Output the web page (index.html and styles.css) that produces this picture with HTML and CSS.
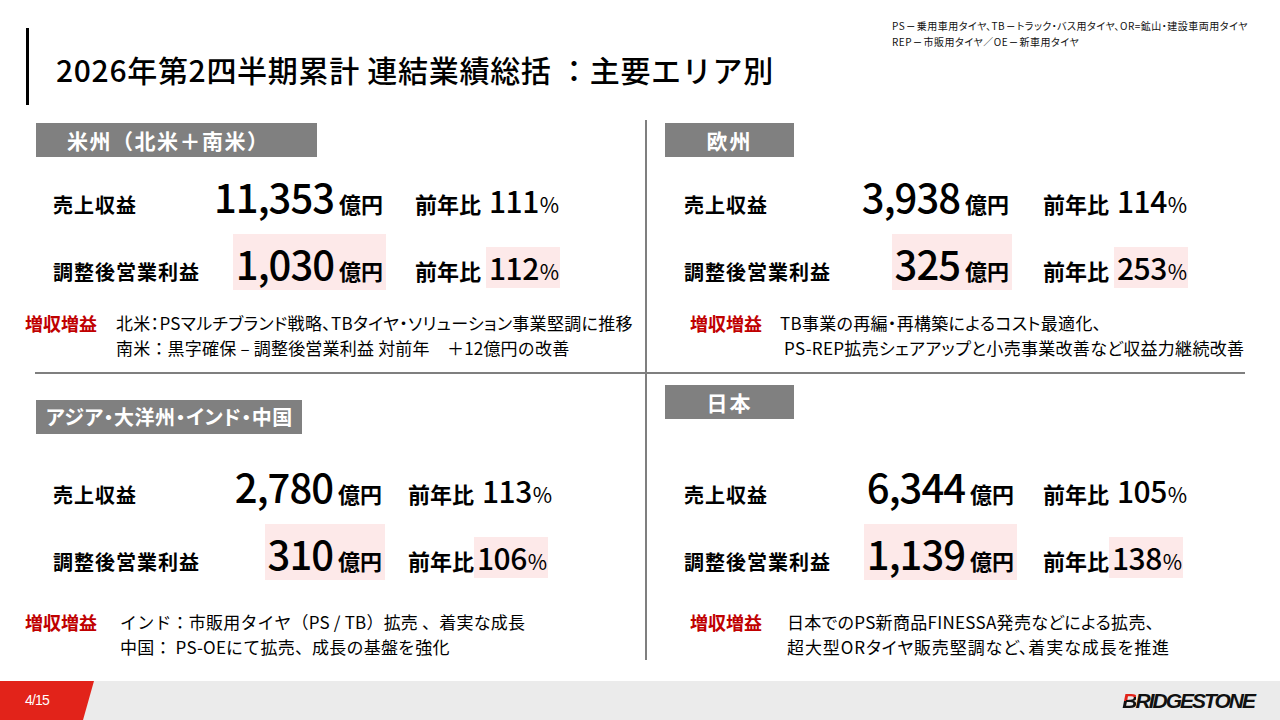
FILE: index.html
```html
<!DOCTYPE html>
<html lang="ja">
<head>
<meta charset="utf-8">
<title>2026年第2四半期累計 連結業績総括：主要エリア別</title>
<link rel="stylesheet" href="styles.css">
</head>
<body>
<div class="slide">
  <header class="top">
    <div class="title-block">
      <div class="title-bar"></div>
      <h1 class="title">2026年第2四半期累計 連結業績総括 ：主要エリア別</h1>
    </div>
    <div class="legend">
      <p>PS<span class="dash">━</span>乗用車用タイヤ、TB<span class="dash">━</span>トラック・バス用タイヤ、OR=鉱山・建設車両用タイヤ</p>
      <p>REP<span class="dash">━</span>市販用タイヤ／OE<span class="dash">━</span>新車用タイヤ</p>
    </div>
  </header>

  <main class="board">
    <section class="quad q-tl">
      <div class="tag tag-americas">米州（北米＋南米）</div>
      <div class="metrics">
        <div class="label">売上収益</div>
        <div class="value"><span class="num">11,353</span><span class="unit">億円</span></div>
        <div class="yoy">前年比 <span class="pct">111<span class="pc">%</span></span></div>
        <div class="label">調整後営業利益</div>
        <div class="value hl"><span class="num">1,030</span><span class="unit">億円</span></div>
        <div class="yoy">前年比 <span class="pct hl">112<span class="pc">%</span></span></div>
      </div>
      <div class="note">
        <span class="note-tag">増収増益</span>
        <div class="note-body">
          <p>北米：PSマルチブランド戦略、TBタイヤ・ソリューション事業堅調に推移</p>
          <p class="wide">南米：黒字確保 – 調整後営業利益 対前年　＋12億円の改善</p>
        </div>
      </div>
    </section>

    <section class="quad q-tr">
      <div class="tag tag-short">欧州</div>
      <div class="metrics">
        <div class="label">売上収益</div>
        <div class="value"><span class="num">3,938</span><span class="unit">億円</span></div>
        <div class="yoy">前年比 <span class="pct">114<span class="pc">%</span></span></div>
        <div class="label">調整後営業利益</div>
        <div class="value hl"><span class="num">325</span><span class="unit">億円</span></div>
        <div class="yoy">前年比 <span class="pct hl">253<span class="pc">%</span></span></div>
      </div>
      <div class="note">
        <span class="note-tag">増収増益</span>
        <div class="note-body">
          <p>TB事業の再編・再構築によるコスト最適化、</p>
          <p>&nbsp;PS-REP拡売シェアアップと小売事業改善など収益力継続改善</p>
        </div>
      </div>
    </section>

    <div class="divider"></div>

    <section class="quad q-bl">
      <div class="tag tag-asia">アジア・大洋州・インド・中国</div>
      <div class="metrics">
        <div class="label">売上収益</div>
        <div class="value"><span class="num">2,780</span><span class="unit">億円</span></div>
        <div class="yoy">前年比 <span class="pct">113<span class="pc">%</span></span></div>
        <div class="label">調整後営業利益</div>
        <div class="value hl"><span class="num">310</span><span class="unit">億円</span></div>
        <div class="yoy">前年比<span class="pct hl">106<span class="pc">%</span></span></div>
      </div>
      <div class="note">
        <span class="note-tag">増収増益</span>
        <div class="note-body">
          <p class="wide">インド：市販用タイヤ（PS / TB）拡売 、着実な成長</p>
          <p class="wide">中国： PS-OEにて拡売、成長の基盤を強化</p>
        </div>
      </div>
    </section>

    <section class="quad q-br">
      <div class="tag tag-short">日本</div>
      <div class="metrics">
        <div class="label">売上収益</div>
        <div class="value"><span class="num">6,344</span><span class="unit">億円</span></div>
        <div class="yoy">前年比 <span class="pct">105<span class="pc">%</span></span></div>
        <div class="label">調整後営業利益</div>
        <div class="value hl"><span class="num">1,139</span><span class="unit">億円</span></div>
        <div class="yoy">前年比<span class="pct hl">138<span class="pc">%</span></span></div>
      </div>
      <div class="note">
        <span class="note-tag">増収増益</span>
        <div class="note-body">
          <p>日本でのPS新商品FINESSA発売などによる拡売、</p>
          <p class="loose">超大型ORタイヤ販売堅調など、着実な成長を推進</p>
        </div>
      </div>
    </section>
  </main>

  <footer class="foot">
    <div class="page-no">4/15</div>
    <div class="logo"><span class="logo-b">B</span>RIDGESTONE</div>
  </footer>
</div>
</body>
</html>
```

FILE: styles.css
```css
* {
  box-sizing: border-box;
  margin: 0;
  padding: 0;
}

html,
body {
  width: 1280px;
  height: 720px;
  background: #fff;
}

body {
  font-family: "Noto Sans CJK JP", "Noto Sans", sans-serif;
  color: #000;
  overflow: hidden;
}

.slide {
  width: 1280px;
  height: 720px;
  display: flex;
  flex-direction: column;
}

/* ---------- header ---------- */
.top {
  height: 120px;
  display: flex;
  align-items: flex-start;
}

.title-block {
  display: flex;
  align-items: center;
  margin-top: 28px;
  margin-left: 26px;
  height: 77px;
}

.title-bar {
  width: 3px;
  height: 77px;
  background: #000;
}

.title {
  margin-left: 27px;
  font-size: 30px;
  font-weight: 500;
  letter-spacing: 0.7px;
  line-height: 1;
  padding-top: 4px;
}

.legend {
  margin-left: auto;
  margin-right: 28px;
  margin-top: 18px;
  width: 360px;
  font-size: 10px;
  line-height: 15px;
  letter-spacing: 0.5px;
  font-feature-settings: "palt";
  color: #111;
  white-space: nowrap;
}

.legend .dash {
  font-size: 7px;
  margin: 0 2px;
  vertical-align: 1px;
}

/* ---------- board ---------- */
.board {
  display: grid;
  grid-template-columns: 647px 1fr;
  grid-template-rows: 252px 2px 286px;
}

.quad {
  display: flex;
  flex-direction: column;
  align-items: flex-start;
}

.q-tl,
.q-bl {
  border-right: 2px solid #7f7f7f;
}

.divider {
  grid-column: 1 / -1;
  margin-left: 35px;
  width: 1210px;
  height: 2px;
  background: #7f7f7f;
}

.tag {
  height: 34px;
  background: #808080;
  color: #fff;
  font-size: 21px;
  font-weight: 700;
  line-height: 34px;
  white-space: nowrap;
}

.tag-americas {
  width: 281px;
  padding-left: 31px;
  letter-spacing: 1.5px;
}

.tag-short {
  width: 129px;
  text-align: center;
  letter-spacing: 2px;
}

.tag-asia {
  width: 266px;
  padding-left: 10px;
  font-size: 20px;
  font-feature-settings: "palt";
  letter-spacing: 0.5px;
}

.q-tl .tag { margin: 3px 0 0 36px; }
.q-tr .tag { margin: 3px 0 0 18px; }
.q-bl .tag { margin: 26px 0 0 36px; }
.q-br .tag { margin: 11px 0 0 18px; }

/* metrics grid */
.metrics {
  display: grid;
  grid-template-columns: 170px var(--vw) auto;
  row-gap: 11px;
  align-items: baseline;
}

.q-tl .metrics { --vw: 163px; --yg: 29px; margin: 10px 0 0 53px; }
.q-tr .metrics { --vw: 158px; --yg: 31px; margin: 10px 0 0 37px; }
.q-bl .metrics { --vw: 162px; --yg: 23px; margin: 23px 0 0 53px; }
.q-br .metrics { --vw: 163px; --yg: 26px; margin: 38px 0 0 37px; }

.label {
  font-size: 20px;
  font-weight: 700;
  letter-spacing: 1px;
  line-height: 1;
  white-space: nowrap;
}

.value {
  justify-self: end;
  font-size: 40px;
  line-height: 1;
  padding: 9px 3px 7px 3px;
  white-space: nowrap;
}

.num {
  font-size: 40px;
  font-weight: 500;
  letter-spacing: -1px;
}

.unit {
  font-size: 22px;
  font-weight: 700;
  margin-left: 5px;
}

.yoy {
  margin-left: var(--yg);
  font-size: 22px;
  font-weight: 700;
  line-height: 1;
  white-space: nowrap;
}

.pct {
  display: inline-block;
  font-size: 30px;
  font-weight: 500;
  line-height: 1;
  padding: 5px 1px 6px 3px;
  letter-spacing: -0.5px;
}

.pc {
  font-size: 21px;
  font-weight: 400;
  margin-left: 1px;
}

.hl {
  background: #fde9e9;
}

/* notes */
.note {
  display: flex;
  align-items: flex-start;
  line-height: 24.7px;
  white-space: nowrap;
}

.note-tag {
  width: var(--ni);
  flex: none;
  color: #c00000;
  font-size: 18px;
  font-weight: 700;
}

.note-body {
  font-size: 17px;
  font-feature-settings: "palt";
  letter-spacing: 0.3px;
}

.note-body .wide {
  font-feature-settings: normal;
  letter-spacing: 0.2px;
}

.note-body .loose {
  letter-spacing: 0.9px;
}

.q-tl .note { --ni: 91px; margin: 21px 0 0 25px; }
.q-tr .note { --ni: 90px; margin: 21px 0 0 43px; }
.q-bl .note { --ni: 95px; margin: 30px 0 0 25px; }
.q-br .note { --ni: 97px; margin: 30px 0 0 43px; }

/* ---------- footer ---------- */
.foot {
  margin-top: 21px;
  height: 39px;
  background: #ebebeb;
  display: flex;
  align-items: center;
}

.page-no {
  width: 94px;
  height: 39px;
  background: #e2231a;
  clip-path: polygon(0 0, 94px 0, 83px 100%, 0 100%);
  color: #fff;
  font-family: "Liberation Sans Narrow", "Liberation Sans", sans-serif;
  font-size: 14px;
  line-height: 39px;
  padding-left: 25px;
  letter-spacing: -0.8px;
}

.logo {
  margin-left: auto;
  margin-right: 26px;
  font-family: "Liberation Sans", sans-serif;
  font-size: 21px;
  font-weight: 700;
  font-style: italic;
  letter-spacing: -2px;
  color: #111;
  line-height: 1;
}

.logo-b {
  background: linear-gradient(160deg, #e2231a 0 46%, #111 46% 100%);
  -webkit-background-clip: text;
  background-clip: text;
  color: transparent;
}
```
